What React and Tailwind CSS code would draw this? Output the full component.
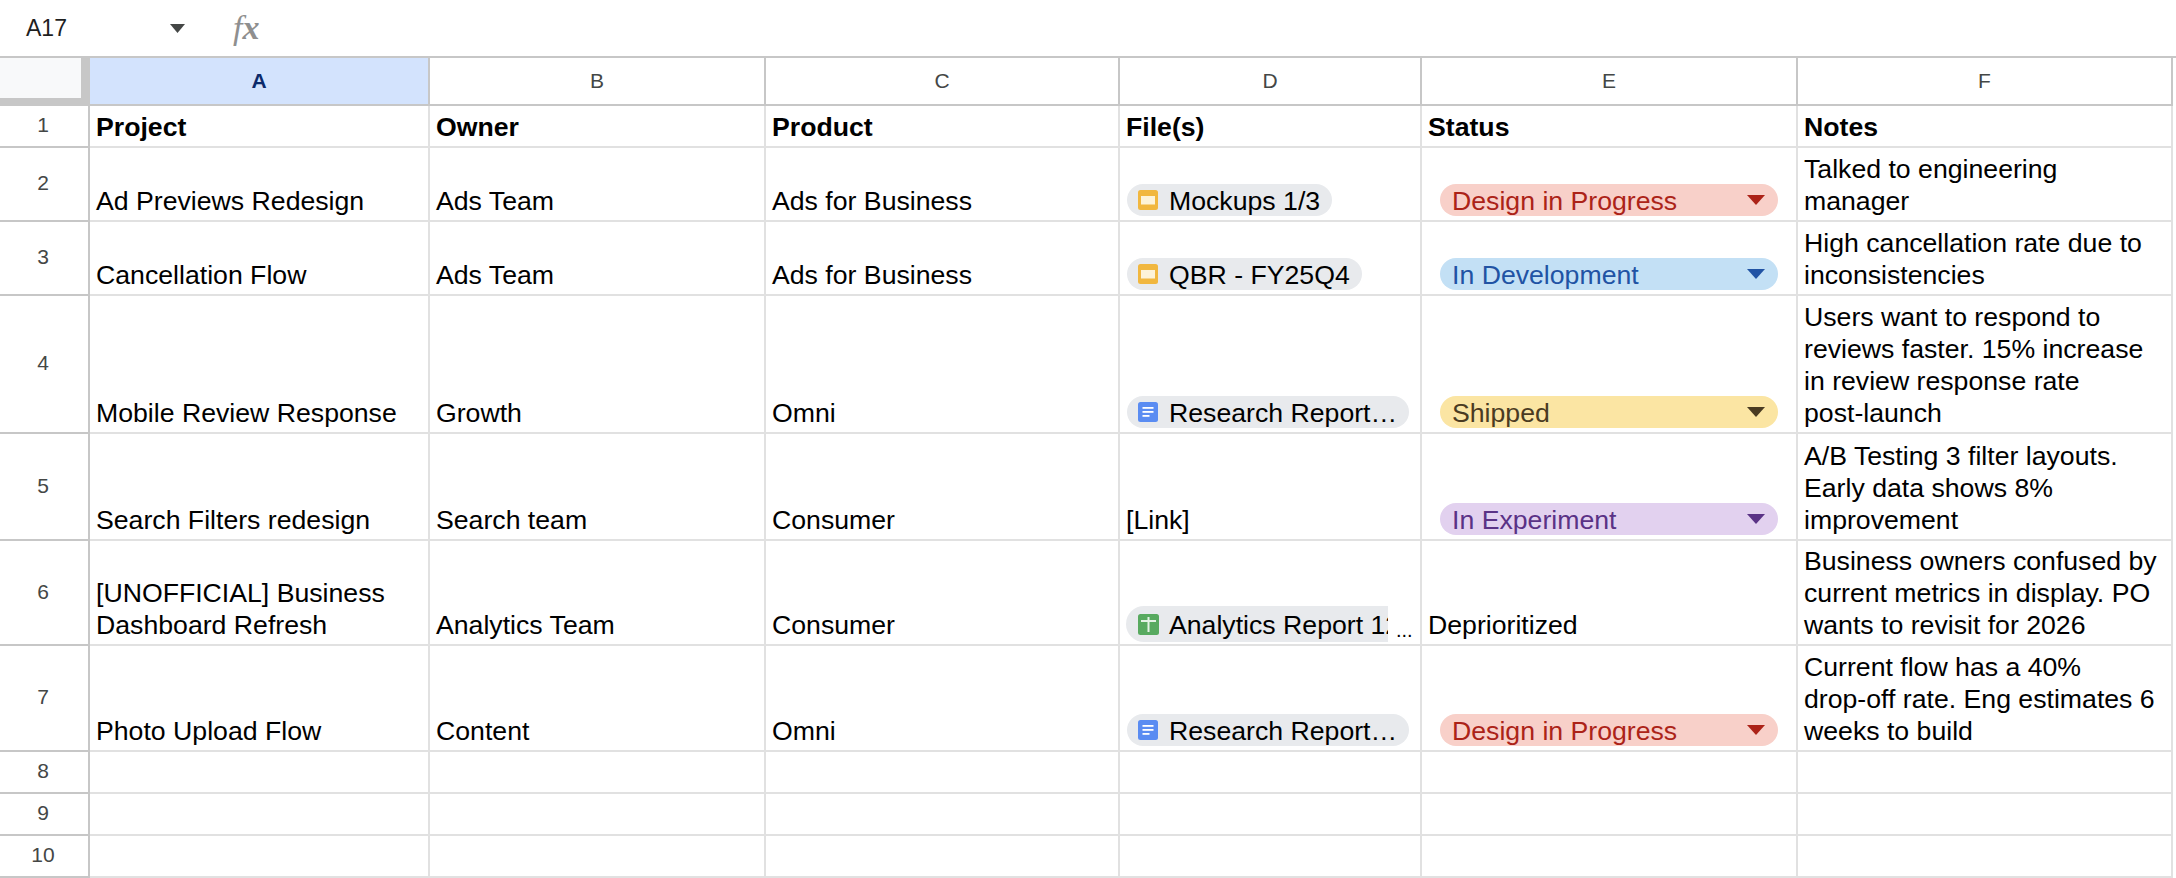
import React from 'react'

const font = { fontFamily: '"Liberation Sans", Arial, sans-serif' }

const columns = ['A', 'B', 'C', 'D', 'E', 'F']

const statuses = {
  design: { label: 'Design in Progress', cls: 'bg-[#f8d0c9] text-[#ac2318]', fill: '#ac2318' },
  dev: { label: 'In Development', cls: 'bg-[#c3e0f5] text-[#2153a4]', fill: '#2153a4' },
  shipped: { label: 'Shipped', cls: 'bg-[#fbe5a3] text-[#4a3b22]', fill: '#4a3b22' },
  experiment: { label: 'In Experiment', cls: 'bg-[#e2d1ef] text-[#5a3286]', fill: '#5a3286' },
}

const rows = [
  { h: 'h-[74px]', a: ['Ad Previews Redesign'], b: 'Ads Team', c: 'Ads for Business', file: { icon: 'slides', name: 'Mockups 1/3' }, status: 'design', notes: ['Talked to engineering', 'manager'] },
  { h: 'h-[74px]', a: ['Cancellation Flow'], b: 'Ads Team', c: 'Ads for Business', file: { icon: 'slides', name: 'QBR - FY25Q4' }, status: 'dev', notes: ['High cancellation rate due to', 'inconsistencies'] },
  { h: 'h-[138px]', a: ['Mobile Review Response'], b: 'Growth', c: 'Omni', file: { icon: 'docs', name: 'Research Report…', w: 'w-[283px]' }, status: 'shipped', notes: ['Users want to respond to', 'reviews faster. 15% increase', 'in review response rate', 'post-launch'] },
  { h: 'h-[107px]', a: ['Search Filters redesign'], b: 'Search team', c: 'Consumer', link: '[Link]', status: 'experiment', notes: ['A/B Testing 3 filter layouts.', 'Early data shows 8%', 'improvement'] },
  { h: 'h-[105px]', a: ['[UNOFFICIAL] Business', 'Dashboard Refresh'], b: 'Analytics Team', c: 'Consumer', clipped: 'Analytics Report 12', plain: 'Deprioritized', notes: ['Business owners confused by', 'current metrics in display. PO', 'wants to revisit for 2026'] },
  { h: 'h-[106px]', a: ['Photo Upload Flow'], b: 'Content', c: 'Omni', file: { icon: 'docs', name: 'Research Report…', w: 'w-[283px]' }, status: 'design', notes: ['Current flow has a 40%', 'drop-off rate. Eng estimates 6', 'weeks to build'] },
]

const Caret = ({ fill, w = 18, h = 10 }) => (
  <svg width={w} height={h} viewBox="0 0 16 9" preserveAspectRatio="none" className="shrink-0">
    <path d="M0 0H16L8 9Z" fill={fill} />
  </svg>
)

const FileIcon = ({ type }) => {
  if (type === 'slides') return (
    <svg width="20" height="20" viewBox="0 0 20 20" className="shrink-0">
      <rect width="20" height="20" rx="2.5" fill="#f1b73f" />
      <rect x="3" y="6" width="14" height="8.5" fill="#fdf3d8" />
    </svg>
  )
  if (type === 'docs') return (
    <svg width="20" height="20" viewBox="0 0 20 20" className="shrink-0">
      <rect width="20" height="20" rx="2.5" fill="#5a8cf2" />
      <rect x="4.5" y="5" width="11" height="1.8" fill="#ffffff" />
      <rect x="4.5" y="9" width="11" height="1.8" fill="#ffffff" />
      <rect x="4.5" y="13" width="7" height="1.8" fill="#ffffff" />
    </svg>
  )
  return (
    <svg width="21" height="21" viewBox="0 0 21 21" className="shrink-0">
      <rect width="21" height="21" rx="2.5" fill="#58aa60" />
      <rect x="3" y="6" width="15" height="2" fill="#e4f2e5" />
      <rect x="9.5" y="3" width="2" height="15" fill="#e4f2e5" />
    </svg>
  )
}

const Chip = ({ icon, name, w }) => (
  <div className={`flex h-[32px] w-fit items-center gap-[11px] rounded-full bg-[#e8eaed] pl-[11px] pr-[12px] ${w || ''}`}>
    <FileIcon type={icon} />
    <span className="whitespace-nowrap pt-[2px]">{name}</span>
  </div>
)

const StatusPill = ({ status }) => {
  const s = statuses[status]
  return (
    <div className={`ml-[12px] flex h-[32px] w-[338px] items-center justify-between rounded-full pl-[12px] pr-[13px] ${s.cls}`}>
      <span className="whitespace-nowrap pt-[2px]">{s.label}</span>
      <Caret fill={s.fill} />
    </div>
  )
}

const Cell = ({ children, pad = 'pb-[3px]' }) => (
  <div className={`flex flex-col justify-end overflow-hidden border-r-2 border-b-2 border-[#e1e1e1] pl-[6px] text-black ${pad}`}>
    {children}
  </div>
)

const Lines = ({ lines }) => lines.map(l => <div key={l} className="whitespace-nowrap">{l}</div>)

const Row = ({ n, height, children }) => (
  <div className={`grid grid-cols-[90px_340px_336px_354px_302px_376px_375px] ${height}`}>
    <div className="flex items-center justify-center border-r-2 border-b-2 border-[#c7c7c7] pr-[2px] pb-[2px] text-[21px] text-[#444746]">{n}</div>
    {children}
  </div>
)

export default function App() {
  return (
    <div className="h-[878px] w-[2176px] overflow-hidden bg-white text-[26.67px] leading-[32px]" style={font}>
      <div className="flex h-[58px] items-center border-b-2 border-[#c7c7c7] pl-[26px]">
        <span className="w-[144px] text-[23px] text-[#1f1f1f]">A17</span>
        <Caret fill="#444746" w={15} h={9} />
        <span className="ml-[48px] select-none text-[34px] text-[#8f8f8f] italic" style={{ fontFamily: '"Liberation Serif", serif' }}>
          f<span className="font-bold">x</span>
        </span>
      </div>

      <div className="grid h-[48px] grid-cols-[90px_340px_336px_354px_302px_376px_375px]">
        <div className="border-r-[9px] border-b-[8px] border-[#c7c7c7] bg-[#f8f9fa]" />
        {columns.map(c => (
          <div
            key={c}
            className={`flex items-center justify-center border-r-2 border-b-2 border-[#c7c7c7] text-[21px] ${c === 'A' ? 'bg-[#d3e3fd] font-bold text-[#0b2a6b]' : 'text-[#444746]'}`}
          >
            {c}
          </div>
        ))}
      </div>

      <Row n={1} height="h-[42px]">
        {['Project', 'Owner', 'Product', 'File(s)', 'Status', 'Notes'].map(t => (
          <Cell key={t}><div className="font-bold">{t}</div></Cell>
        ))}
      </Row>

      {rows.map((r, i) => (
        <Row key={i} n={i + 2} height={r.h}>
          <Cell><Lines lines={r.a} /></Cell>
          <Cell>{r.b}</Cell>
          <Cell>{r.c}</Cell>
          {r.file && <Cell pad="pb-[4px]"><div className="ml-[1px]"><Chip {...r.file} /></div></Cell>}
          {r.link && <Cell>{r.link}</Cell>}
          {r.clipped && (
            <Cell pad="pb-[2px]">
              <div className="flex items-end">
                <div className="flex h-[36px] w-[262px] items-center gap-[10px] overflow-hidden rounded-l-full bg-[#e8eaed] pl-[12px]">
                  <FileIcon type="sheets" />
                  <span className="whitespace-nowrap pt-[2px]">{r.clipped}</span>
                </div>
                <span className="ml-[8px] text-[20px] leading-[24px]">...</span>
              </div>
            </Cell>
          )}
          {r.status ? <Cell pad="pb-[4px]"><StatusPill status={r.status} /></Cell> : <Cell>{r.plain}</Cell>}
          <Cell><Lines lines={r.notes} /></Cell>
        </Row>
      ))}

      {[8, 9, 10].map(n => (
        <Row key={n} n={n} height="h-[42px]">
          {columns.map(c => <Cell key={c} />)}
        </Row>
      ))}
    </div>
  )
}
